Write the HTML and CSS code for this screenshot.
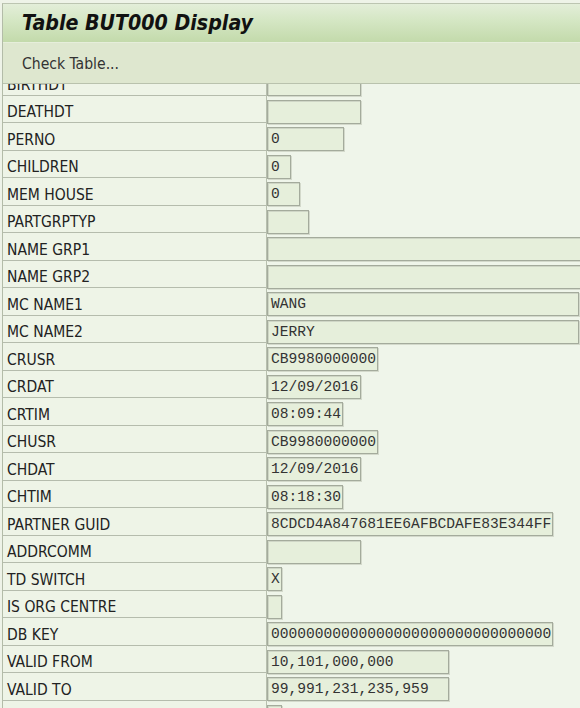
FILE: index.html
```html
<!DOCTYPE html>
<html>
<head>
<meta charset="utf-8">
<title>Table BUT000 Display</title>
<link rel="stylesheet" href="styles.css">
</head>
<body>
<div class="window">
  <div class="titlebar"><h1 class="title">Table BUT000 Display</h1></div>
  <div class="toolbar"><span class="tool">Check Table...</span></div>
  <div class="viewport">
    <div class="rows">
      <div class="row"><div class="label">BIRTHDT</div><div class="field w94"></div></div>
      <div class="row"><div class="label">DEATHDT</div><div class="field w94"></div></div>
      <div class="row"><div class="label">PERNO</div><div class="field w77">0</div></div>
      <div class="row"><div class="label">CHILDREN</div><div class="field w24">0</div></div>
      <div class="row"><div class="label">MEM HOUSE</div><div class="field w33">0</div></div>
      <div class="row"><div class="label">PARTGRPTYP</div><div class="field w42"></div></div>
      <div class="row"><div class="label">NAME GRP1</div><div class="field w330"></div></div>
      <div class="row"><div class="label">NAME GRP2</div><div class="field w330"></div></div>
      <div class="row"><div class="label">MC NAME1</div><div class="field w312">WANG</div></div>
      <div class="row"><div class="label">MC NAME2</div><div class="field w312">JERRY</div></div>
      <div class="row"><div class="label">CRUSR</div><div class="field w111">CB9980000000</div></div>
      <div class="row"><div class="label">CRDAT</div><div class="field w94">12/09/2016</div></div>
      <div class="row"><div class="label">CRTIM</div><div class="field w76">08:09:44</div></div>
      <div class="row"><div class="label">CHUSR</div><div class="field w111">CB9980000000</div></div>
      <div class="row"><div class="label">CHDAT</div><div class="field w94">12/09/2016</div></div>
      <div class="row"><div class="label">CHTIM</div><div class="field w76">08:18:30</div></div>
      <div class="row"><div class="label">PARTNER GUID</div><div class="field w286">8CDCD4A847681EE6AFBCDAFE83E344FF</div></div>
      <div class="row"><div class="label">ADDRCOMM</div><div class="field w94"></div></div>
      <div class="row"><div class="label">TD SWITCH</div><div class="field w15">X</div></div>
      <div class="row"><div class="label">IS ORG CENTRE</div><div class="field w15"></div></div>
      <div class="row"><div class="label">DB KEY</div><div class="field w286">00000000000000000000000000000000</div></div>
      <div class="row"><div class="label">VALID FROM</div><div class="field w182">10,101,000,000</div></div>
      <div class="row"><div class="label">VALID TO</div><div class="field w182">99,991,231,235,959</div></div>
      <div class="row"><div class="label"></div><div class="field w15"></div></div>
    </div>
  </div>
</div>
</body>
</html>
```

FILE: styles.css
```css
html, body {
  margin: 0;
  padding: 0;
}
body {
  width: 580px;
  height: 708px;
  overflow: hidden;
  background: #eef3e8;
}
.window {
  margin: 3px 0 0 2px;
  height: 705px;
  border-top: 1px solid #bcc5b1;
  border-left: 1px solid #b3bca8;
  background: #eff5ea;
  display: flex;
  flex-direction: column;
  overflow: hidden;
}
.titlebar {
  height: 38px;
  flex: none;
  background: linear-gradient(#e3eed9, #d4e6c3 45%, #c3daab);
  display: flex;
  align-items: center;
  padding-left: 19px;
}
.title {
  margin: 0;
  font-family: "DejaVu Sans Condensed", "DejaVu Sans", sans-serif;
  font-stretch: condensed;
  font-weight: bold;
  font-style: italic;
  font-size: 21.2px;
  color: #111;
  line-height: 24px;
}
.toolbar {
  height: 42px;
  flex: none;
  box-sizing: border-box;
  background: #dee7cf;
  border-top: 1px solid #e6eedb;
  border-bottom: 1px solid #b9c2ad;
  display: flex;
  align-items: center;
  padding-left: 19px;
  padding-top: 2px;
}
.tool {
  font-family: "DejaVu Sans Condensed", "DejaVu Sans", sans-serif;
  font-stretch: condensed;
  font-size: 15.6px;
  color: #333;
}
.viewport {
  flex: 1;
  overflow: hidden;
}
.rows {
  margin-top: -16px;
}
.row {
  display: flex;
  align-items: flex-start;
  height: 27.5px;
}
.label {
  box-sizing: border-box;
  width: 264px;
  height: 27.5px;
  flex: none;
  border-right: 1px solid #b7bfae;
  border-bottom: 1px solid #b5bcad;
  background: #eef4e7;
  padding: 7.5px 0 0 4px;
  font-family: "DejaVu Sans Condensed", "DejaVu Sans", sans-serif;
  font-stretch: condensed;
  font-size: 15.5px;
  line-height: 18px;
  color: #222;
  white-space: nowrap;
}
.field {
  box-sizing: border-box;
  flex: none;
  height: 24px;
  margin-top: 4px;
  border: 1px solid #a4ab9c;
  box-shadow: inset 1px 1px 0 #cfd6c6, 1px 1px 0 #d3d9cb;
  background: #e6efdb;
  padding-left: 3px;
  font-family: "Liberation Mono", "DejaVu Sans Mono", monospace;
  font-size: 14.6px;
  line-height: 22px;
  color: #333;
  white-space: nowrap;
  overflow: hidden;
}
.w15 { width: 15px; }
.w24 { width: 24px; }
.w33 { width: 33px; }
.w42 { width: 42px; }
.w76 { width: 76px; }
.w77 { width: 77px; }
.w94 { width: 94px; }
.w111 { width: 111px; }
.w182 { width: 182px; }
.w286 { width: 286px; }
.w312 { width: 312px; }
.w330 { width: 330px; }
```
